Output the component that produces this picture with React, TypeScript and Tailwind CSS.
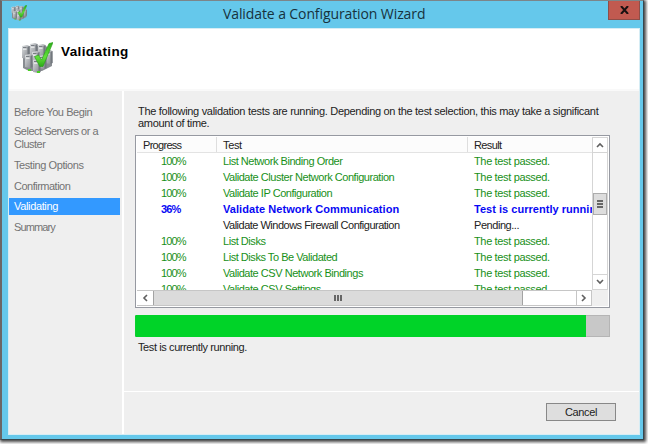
import type { ReactNode } from 'react';

type Test = { progress: string; name: string; result: string; state: 'passed' | 'running' | 'pending' };

const tests: Test[] = [
  { progress: '100%', name: 'List Network Binding Order', result: 'The test passed.', state: 'passed' },
  { progress: '100%', name: 'Validate Cluster Network Configuration', result: 'The test passed.', state: 'passed' },
  { progress: '100%', name: 'Validate IP Configuration', result: 'The test passed.', state: 'passed' },
  { progress: '36%', name: 'Validate Network Communication', result: 'Test is currently running.', state: 'running' },
  { progress: '', name: 'Validate Windows Firewall Configuration', result: 'Pending...', state: 'pending' },
  { progress: '100%', name: 'List Disks', result: 'The test passed.', state: 'passed' },
  { progress: '100%', name: 'List Disks To Be Validated', result: 'The test passed.', state: 'passed' },
  { progress: '100%', name: 'Validate CSV Network Bindings', result: 'The test passed.', state: 'passed' },
  { progress: '100%', name: 'Validate CSV Settings', result: 'The test passed.', state: 'passed' },
];

const rowStyle = {
  passed: 'text-[#189018]',
  running: 'text-[#0808f4] font-bold',
  pending: 'text-[#222222]',
};

const nameStyle = {
  passed: 'tracking-[-0.46px]',
  running: 'tracking-[0.07px]',
  pending: 'tracking-[-0.5px]',
};

const resultStyle = {
  passed: 'tracking-[-0.35px]',
  running: 'tracking-[0.03px]',
  pending: 'tracking-[-0.45px]',
};

function ClusterIcon({ className }: { className: string }) {
  const towers = [
    [9, 1], [17, 2], [1, 3], [24, 8], [11, 9], [18, 13], [4, 12], [12, 17],
  ];
  return (
    <svg viewBox="0 0 32 32" className={className}>
      <defs>
        <linearGradient id="metal" x1="0" x2="1" y2="1">
          <stop offset="0" stopColor="#dde0e2" />
          <stop offset="0.5" stopColor="#adb0b4" />
          <stop offset="1" stopColor="#80848a" />
        </linearGradient>
        <linearGradient id="tick" x1="0" y1="0" x2="0" y2="1">
          <stop offset="0" stopColor="#2fae1c" />
          <stop offset="0.6" stopColor="#62e03a" />
          <stop offset="1" stopColor="#2daa18" />
        </linearGradient>
      </defs>
      <path d="M2 6 9 4H25L31 10V24L21 29H8L2 26Z" fill="#888c91" />
      {towers.map(([x, y]) => (
        <g key={`${x}-${y}`} transform={`translate(${x} ${y})`}>
          <path d="M0 1 5 0 7.5 1V13L5 14 0 13Z" fill="url(#metal)" />
          <path d="M5.5 2 7.5 1V13L5.5 14Z" fill="#73787e" />
          <path d="M1 2.5H4.5" stroke="#6f747a" strokeWidth="0.9" />
          <path d="M1 4.2H4.5" stroke="#f2f3f4" strokeWidth="1" />
        </g>
      ))}
      <path d="M7 28h3M16 30h3" stroke="#48cf23" strokeWidth="1.8" />
      <path d="M13.5 14.5 17.5 13 20.5 18 28 1.5 32 .5 22 24.5H18.8Z" fill="url(#tick)" stroke="#279d18" strokeWidth="0.6" />
    </svg>
  );
}

function Chevron({ d }: { d: string }) {
  return (
    <svg viewBox="0 0 8 8" className="size-2" fill="none" stroke="#606060" strokeWidth="1.6">
      <path d={d} />
    </svg>
  );
}

function Step({ children, className }: { children: ReactNode; className: string }) {
  return <div className={`w-[111px] pl-[5px] ${className}`}>{children}</div>;
}

export default function App() {
  return (
    <div className="h-[444px] w-[648px] overflow-hidden bg-white pr-[4px] pb-[4px] font-['Liberation_Sans',sans-serif] text-[11px] tracking-[-0.35px] text-[#222222]">
      <div className="flex h-[440px] w-[644px] flex-col border border-t-[#7c8589] border-r-[#36474e] border-b-[#36474e] border-l-2 border-l-[#6b6666] bg-[#65c8eb] pr-[3px] pb-[4px] pl-[6px] shadow-[1px_1px_3px_1px_#444444]">
        <header className="flex h-[27px] shrink-0">
          <ClusterIcon className="mt-[4px] ml-[3px] size-[16px] shrink-0" />
          <h1 className="mt-[2px] ml-[196px] w-[204px] font-['Open_Sans',sans-serif] text-[14px] leading-[22px] tracking-[-0.1px] whitespace-nowrap text-[#17323d]">
            Validate a Configuration Wizard
          </h1>
          <button aria-label="Close" className="ml-auto flex h-[19px] w-8 items-center justify-center border border-t-0 border-[#8e4e48] bg-[#c15a50]">
            <svg viewBox="0 0 9 8" className="h-2 w-[9px]" stroke="#171010" strokeWidth="2">
              <path d="M1 0 8 8M8 0 1 8" />
            </svg>
          </button>
        </header>

        <div className="flex min-h-0 flex-1 flex-col border border-[#d6edf5] bg-[#efefef]">
          <div className="flex h-[62px] shrink-0 border-b-2 border-[#f9f9f9] bg-white">
            <ClusterIcon className="mt-[13px] ml-[12px] size-[32px]" />
            <h2 className="mt-[15px] ml-[8px] text-[13.5px] leading-[16px] font-bold tracking-[0.4px] text-black">Validating</h2>
          </div>

          <div className="flex min-h-0 flex-1">
            <nav className="flex w-[115px] shrink-0 flex-col border-r-2 border-white pt-[15px] leading-[12px] text-[#737373]">
              <Step className="tracking-[-0.43px]">Before You Begin</Step>
              <Step className="mt-[7px] leading-[12.5px] tracking-[-0.5px]">Select Servers or a<br />Cluster</Step>
              <Step className="mt-[9px] tracking-[-0.42px]">Testing Options</Step>
              <Step className="mt-[9px] tracking-[-0.5px]">Confirmation</Step>
              <Step className="mt-[6px] bg-[#3399ff] pt-[2px] pb-[3px] text-white">Validating</Step>
              <Step className="mt-[6px] tracking-[-0.9px]">Summary</Step>
            </nav>

            <main className="flex min-w-0 flex-1 flex-col">
              <section className="flex h-[301px] shrink-0 flex-col border-b border-white pt-[14px] pl-[11px]">
                <p className="ml-[3px] leading-[12px] tracking-[-0.3px] whitespace-nowrap">
                  The following validation tests are running. Depending on the test selection, this may take a significant<br />amount of time.
                </p>

                <div className="mt-[6px] flex h-[173px] w-[475px] shrink-0 flex-col border border-[#9699a1] bg-white p-px">
                  <div className="flex h-[153px]">
                    <div className="flex w-[455px] flex-col overflow-hidden">
                      <div className="flex h-4 shrink-0 border-b border-[#e3e3e3] bg-[#fcfcfc] leading-4">
                        <span className="w-[80px] border-r border-[#dedede] pl-[6px] tracking-[-0.7px]">Progress</span>
                        <span className="w-[251px] border-r border-[#dedede] pl-[6px]">Test</span>
                        <span className="pl-[6px] tracking-[-0.6px]">Result</span>
                      </div>
                      {tests.map((test) => (
                        <div key={test.name} className={`flex h-4 shrink-0 leading-4 whitespace-nowrap ${rowStyle[test.state]}`}>
                          <span className="w-[86px] shrink-0 pl-[24px] tracking-[-0.9px]">{test.progress}</span>
                          <span className={`w-[251px] shrink-0 ${nameStyle[test.state]}`}>{test.name}</span>
                          <span className={resultStyle[test.state]}>{test.result}</span>
                        </div>
                      ))}
                    </div>
                    <div className="flex w-4 flex-col border-x border-[#d5d5d5] bg-white">
                      <div className="flex h-4 items-center justify-center border-y border-[#d5d5d5]"><Chevron d="M1 6 4 3 7 6" /></div>
                      <div className="mt-[40px] flex h-[22px] flex-col items-center justify-center gap-px border border-[#acacac] bg-[#dddddd]">
                        <i className="h-[2px] w-[6px] bg-[#666666]" />
                        <i className="h-[2px] w-[6px] bg-[#666666]" />
                        <i className="h-[2px] w-[6px] bg-[#666666]" />
                      </div>
                      <div className="mt-auto flex h-4 items-center justify-center border-y border-[#d5d5d5]"><Chevron d="M1 2 4 5 7 2" /></div>
                    </div>
                  </div>
                  <div className="flex h-4 bg-[#efefef]">
                    <div className="flex w-[455px] border-y border-[#c6c6c6] bg-white">
                      <div className="flex w-4 items-center justify-center"><Chevron d="M6 1 3 4 6 7" /></div>
                      <div className="flex w-[370px] items-center justify-center gap-px border-x border-[#a3a3a3] bg-[#dbdbdb]">
                        <i className="h-[6px] w-[2px] bg-[#666666]" />
                        <i className="h-[6px] w-[2px] bg-[#666666]" />
                        <i className="h-[6px] w-[2px] bg-[#666666]" />
                      </div>
                      <div className="ml-auto flex w-4 items-center justify-center border-x border-[#c6c6c6]"><Chevron d="M2 1 5 4 2 7" /></div>
                    </div>
                  </div>
                </div>

                <div className="mt-[7px] h-[22px] w-[475px] shrink-0 border border-[#b5b5b5] border-l-[#0bcf2e] bg-[#c8c8c8]">
                  <div className="-mt-px h-[22px] w-[450px] bg-[#00d328]" />
                </div>
                <p className="mt-[4px] ml-[3px] leading-[12px] tracking-[-0.4px]">Test is currently running.</p>
              </section>

              <footer className="flex flex-1 items-start justify-end pt-[11px] pr-[23px]">
                <button className="h-[18px] w-[70px] border border-[#888888] bg-[#dedede] leading-4">Cancel</button>
              </footer>
            </main>
          </div>
        </div>
      </div>
    </div>
  );
}
